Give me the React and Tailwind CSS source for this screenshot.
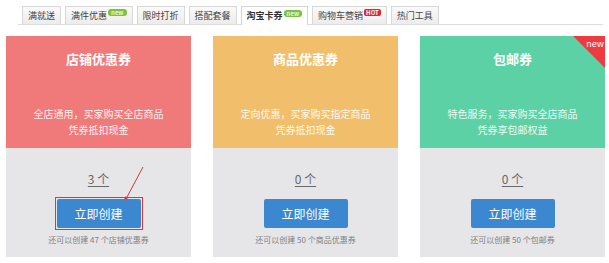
import React from 'react'

const font = { fontFamily: '"Noto Sans CJK SC", "Noto Sans", sans-serif' }

const tabs = [
  { label: '满就送' },
  { label: '满件优惠', badge: 'new' },
  { label: '限时打折' },
  { label: '搭配套餐' },
  { label: '淘宝卡券', badge: 'new', active: true },
  { label: '购物车营销', badge: 'hot' },
  { label: '热门工具' },
]

const cards = [
  {
    title: '店铺优惠券',
    color: 'bg-[#f07a7a]',
    desc: ['全店通用，买家购买全店商品', '凭券抵扣现金'],
    count: '3 个',
    left: '还可以创建 47 个店铺优惠券',
    marked: true,
  },
  {
    title: '商品优惠券',
    color: 'bg-[#f1bf6c]',
    desc: ['定向优惠，买家购买指定商品', '凭券抵扣现金'],
    count: '0 个',
    left: '还可以创建 50 个商品优惠券',
  },
  {
    title: '包邮券',
    color: 'bg-[#5dd1a6]',
    desc: ['特色服务，买家购买全店商品', '凭券享包邮权益'],
    count: '0 个',
    left: '还可以创建 50 个包邮券',
    isNew: true,
  },
]

function Badge({ type }) {
  if (type === 'hot') {
    return (
      <span className="ml-[1px] -mt-[6px] rounded-[2px] bg-[#e0262f] px-[2px] text-[6px] leading-[7px] font-bold text-white">
        HOT
      </span>
    )
  }
  return (
    <span className="ml-[1px] -mt-[6px] rounded-[3px] bg-[#7cc242] px-[3px] text-[6px] leading-[7px] font-bold text-[#e9f7cf]">
      new
    </span>
  )
}

function Card({ c }) {
  return (
    <div className="relative w-[185px] shrink-0 overflow-hidden">
      <div className={`${c.color} h-[112px] flex flex-col items-center text-white`}>
        <div className="mt-[14px] text-[13px] font-bold leading-[18px]">{c.title}</div>
        <div className="mt-[38px] text-[10px] leading-[16px] opacity-90 text-center">
          <div>{c.desc[0]}</div>
          <div>{c.desc[1]}</div>
        </div>
      </div>
      <div className="bg-[#e6e6e8] h-[109px] flex flex-col items-center">
        <div className="mt-[22px] text-[12px] leading-[18px] text-[#666] underline underline-offset-2">{c.count}</div>
        <div className={`mt-[9px] ${c.marked ? 'border border-[#e0353d] p-[1px]' : 'p-[2px]'}`}>
          <div className="w-[84px] h-[29px] bg-[#3b88d0] rounded-[2px] flex items-center justify-center text-white text-[12px]">
            立即创建
          </div>
        </div>
        <div className="mt-[4px] text-[8px] leading-[12px] text-[#808080]">{c.left}</div>
      </div>
      {c.isNew && (
        <div className="absolute top-0 right-0 w-[32px] h-[32px] overflow-hidden">
          <div className="absolute top-0 right-0 w-0 h-0 border-t-[32px] border-l-[32px] border-t-[#ee3b3f] border-l-transparent" />
          <span className="absolute top-[3px] right-[1px] text-[9px] leading-[10px] text-white">new</span>
        </div>
      )}
    </div>
  )
}

export default function App() {
  return (
    <div className="relative w-[609px] h-[263px] bg-white overflow-hidden" style={font}>
      {/* tabs */}
      <div className="ml-[18px] mr-[6px] mt-[6px] flex items-end gap-[4px] border-b border-[#dcdcdc] pl-[4px]">
        {tabs.map(t => (
          <div
            key={t.label}
            className={`flex items-center h-[18px] px-[5px] border border-b-0 text-[9px] leading-[12px] ${
              t.active
                ? 'bg-white border-[#d4d4d4] text-[#333] font-bold h-[19px] -mb-[1px]'
                : 'bg-gradient-to-b from-[#fafafa] to-[#ececec] border-[#d8d8d8] text-[#444]'
            }`}
          >
            {t.label}
            {t.badge && <Badge type={t.badge} />}
          </div>
        ))}
      </div>

      {/* cards */}
      <div className="flex ml-[6px] mt-[11px] gap-[22px]">
        {cards.map(c => (
          <Card key={c.title} c={c} />
        ))}
      </div>

      {/* annotation arrow */}
      <svg className="absolute left-0 top-0" width="609" height="263" viewBox="0 0 609 263">
        <line x1="143" y1="167" x2="127" y2="197" stroke="#d9363e" strokeWidth="1" />
        <circle cx="126" cy="198" r="1.6" fill="#d9363e" />
      </svg>
    </div>
  )
}
